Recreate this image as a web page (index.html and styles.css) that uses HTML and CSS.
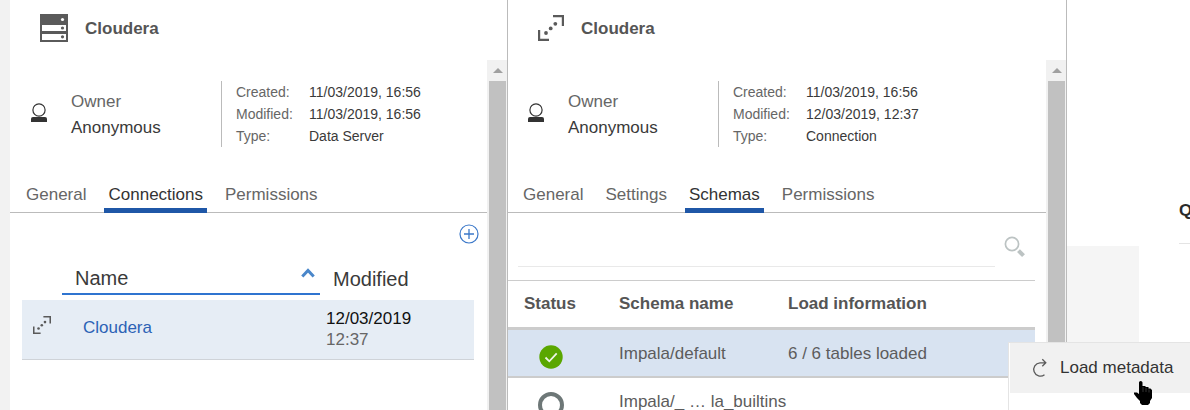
FILE: index.html
```html
<!DOCTYPE html>
<html lang="en">
<head>
<meta charset="utf-8">
<title>Cloudera</title>
<meta name="viewport" content="width=device-width, initial-scale=1">
<link rel="stylesheet" href="styles.css">
</head>
<body>
<svg class="sprite" aria-hidden="true">
  <symbol id="user" viewBox="0 0 16 20">
    <circle cx="8" cy="7" r="6.1" fill="none" stroke="#333" stroke-width="1.2"/>
    <path d="M0 19v-3q0-2 2-2h12q2 0 2 2v3z" fill="#333"/>
  </symbol>
  <symbol id="connection" viewBox="0 0 26 26">
    <path d="M15 1.1h9.9V11M1.1 15v9.9H11" fill="none" stroke="#5a5a5a" stroke-width="2.2"/>
    <circle cx="8" cy="18" r="1.9" fill="#5a5a5a"/><circle cx="12.7" cy="13.4" r="1.9" fill="#5a5a5a"/><circle cx="17.3" cy="8.8" r="1.9" fill="#5a5a5a"/>
  </symbol>
</svg>
<main class="workspace">
  <section class="panel panel-server">
    <header class="panel-header">
      <svg class="server-icon" viewBox="0 0 28 28" aria-hidden="true">
        <path d="M0 0h28v28H0z" fill="#5a5a5a"/>
        <path d="M2 11h24v6H2zM2 20h24v6H2z" fill="#fff"/>
        <circle cx="22.500" cy="5.500" r="1.600" fill="#fff"/><circle cx="22.500" cy="14" r="1.600" fill="#5a5a5a"/><circle cx="22.500" cy="22.800" r="1.600" fill="#5a5a5a"/>
      </svg>
      <h1 class="panel-title">Cloudera</h1>
    </header>
    <div class="panel-body">
      <div class="panel-content">
        <div class="summary">
          <svg class="user-icon" aria-hidden="true"><use href="#user"/></svg>
          <div class="owner"><div class="muted">Owner</div><div>Anonymous</div></div>
          <dl class="facts">
            <dt>Created:</dt><dd>11/03/2019, 16:56</dd>
            <dt>Modified:</dt><dd>11/03/2019, 16:56</dd>
            <dt>Type:</dt><dd>Data Server</dd>
          </dl>
        </div>
        <nav class="tabs">
          <button class="tab" type="button">General</button>
          <button class="tab active" type="button">Connections</button>
          <button class="tab" type="button">Permissions</button>
        </nav>
        <div class="toolbar">
          <button class="icon-button" type="button" aria-label="Add connection">
            <svg width="20" height="20" viewBox="0 0 20 20"><circle cx="10" cy="10" r="9" fill="none" stroke="#3b78c9" stroke-width="1.2"/><path d="M10 5v10M5 10h10" stroke="#3b78c9" stroke-width="1.3"/></svg>
          </button>
        </div>
        <table class="connections">
          <thead>
            <tr>
              <th class="col-icon"></th>
              <th class="col-name"><button class="sort" type="button">Name
                <svg width="14" height="10" viewBox="0 0 14 10" aria-hidden="true"><path d="M1.3 8.5L7 2.500l5.700 6" fill="none" stroke="#4a87ca" stroke-width="3"/></svg></button></th>
              <th class="col-modified">Modified</th>
            </tr>
          </thead>
          <tbody>
            <tr>
              <td class="type"><svg width="18" height="18" aria-hidden="true"><use href="#connection"/></svg></td>
              <td class="name"><a href="#cloudera">Cloudera</a></td>
              <td class="modified"><div class="date">12/03/2019</div><div>12:37</div></td>
            </tr>
          </tbody>
        </table>
      </div>
      <div class="scrollbar" aria-hidden="true"><div class="arrow"></div><div class="thumb"></div></div>
    </div>
  </section>

  <section class="panel panel-connection">
    <header class="panel-header">
      <svg class="connection-icon" aria-hidden="true"><use href="#connection"/></svg>
      <h1 class="panel-title">Cloudera</h1>
    </header>
    <div class="panel-body">
      <div class="panel-content">
        <div class="summary">
          <svg class="user-icon" aria-hidden="true"><use href="#user"/></svg>
          <div class="owner"><div class="muted">Owner</div><div>Anonymous</div></div>
          <dl class="facts">
            <dt>Created:</dt><dd>11/03/2019, 16:56</dd>
            <dt>Modified:</dt><dd>12/03/2019, 12:37</dd>
            <dt>Type:</dt><dd>Connection</dd>
          </dl>
        </div>
        <nav class="tabs">
          <button class="tab" type="button">General</button>
          <button class="tab" type="button">Settings</button>
          <button class="tab active" type="button">Schemas</button>
          <button class="tab" type="button">Permissions</button>
        </nav>
        <form class="search">
          <input type="search" aria-label="Search schemas">
          <button class="icon-button" type="button" aria-label="Search">
            <svg width="22" height="22" viewBox="0 0 22 22"><circle cx="8" cy="8" r="6.6" fill="none" stroke="#bcc3c3" stroke-width="1.7"/><path d="M14.500 14.700l5 5" stroke="#bcc3c3" stroke-width="4"/></svg>
          </button>
        </form>
        <table class="schemas">
          <thead>
            <tr><th class="col-status">Status</th><th class="col-schema">Schema name</th><th>Load information</th></tr>
          </thead>
          <tbody>
            <tr class="selected">
              <td class="status"><svg width="26" height="26" viewBox="0 0 26 26" role="img" aria-label="Loaded"><circle cx="13" cy="13" r="11.7" fill="#5aa700"/><path d="M7.500 13.500l3.800 3.800 7.400-8" fill="none" stroke="#eef5e6" stroke-width="1.8"/></svg></td>
              <td>Impala/default</td><td>6 / 6 tables loaded</td>
            </tr>
            <tr>
              <td class="status"><svg width="26" height="26" viewBox="0 0 26 26" role="img" aria-label="Not loaded"><circle cx="13" cy="13" r="11" fill="none" stroke="#6d7777" stroke-width="4"/></svg></td>
              <td>Impala/_ … la_builtins</td><td></td>
            </tr>
          </tbody>
        </table>
      </div>
      <div class="scrollbar" aria-hidden="true"><div class="arrow"></div><div class="thumb"></div></div>
    </div>
  </section>

  <aside class="backdrop">
    <div class="backdrop-head"><h2>Q</h2></div>
    <div class="backdrop-tile"></div>
  </aside>
</main>

<div class="menu" role="menu">
  <button class="menu-item" type="button" role="menuitem">
    <svg width="16" height="20" viewBox="0 0 16 20" aria-hidden="true"><path d="M13.500 4.800H8A6.700 6.700 0 1 0 12.500 16.800M10.300 1.300L13.800 4.800 10.300 8.300" fill="none" stroke="#5a5a5a" stroke-width="1.3"/></svg>
    Load metadata
  </button>
  <svg class="pointer" viewBox="0 0 18 24" aria-hidden="true"><path d="M5 1.500Q5 0 6.700 0T8.500 1.500V5h3v1h3v1.500h2l1.500 1.500v8l-2 3v2l-2 2H8l-2-2v-2l-3-3-3-4v-1.500h3l2 1.500z" fill="#000"/><path d="M9 6v5M12 7v4M15 8.500v3" stroke="#555" stroke-width=".6"/></svg>
</div>
</body>
</html>
```
FILE: styles.css
```css
* { box-sizing: border-box; }

body {
  margin: 0;
  height: 100vh;
  overflow: hidden;
  position: relative;
  background: #fff;
  color: #3a3a3a;
  font: 17px/20px "Liberation Sans", Arial, sans-serif;
}

h1, h2, dl, dd { margin: 0; }

button, input {
  margin: 0;
  padding: 0;
  border: 0;
  background: none;
  color: inherit;
  font: inherit;
}

svg { display: block; flex: none; }
.sprite { position: absolute; width: 0; height: 0; }

.workspace {
  display: grid;
  grid-template-columns: 497fr 560fr 123fr;
  height: 100%;
  padding-left: 10px;
  background: linear-gradient(to right, #f2f2f2 10px, #fff 10px);
}

.panel {
  display: flex;
  flex-direction: column;
  min-width: 0;
  min-height: 0;
}
.panel-connection {
  border-left: 1px solid #bbb;
  border-right: 1px solid #bbb;
}

.panel-header {
  display: flex;
  align-items: center;
  gap: 17px;
  height: 60px;
  padding: 0 30px 4px;
}
.panel-title {
  padding-top: 2px;
  color: #555;
  font-size: 17px;
}
.server-icon { width: 28px; height: 28px; }
.connection-icon { width: 26px; height: 26px; }

.panel-body { display: flex; flex: 1; min-height: 0; }
.panel-content { flex: 1; min-width: 0; overflow: hidden; }

.scrollbar {
  flex: none;
  display: flex;
  flex-direction: column;
  width: 20px;
  padding: 0 1px 0 2px;
  background: #f1f1f1;
}
.arrow {
  display: flex;
  align-items: center;
  justify-content: center;
  height: 21px;
}
.arrow::before {
  content: "";
  border: 5px solid transparent;
  border-top: 0;
  border-bottom-color: #a0a0a0;
}
.thumb { flex: 1; background: #c1c1c1; }

.summary {
  display: flex;
  padding: 21px 0 0 21px;
}
.panel-connection .summary { padding-left: 20px; }
.user-icon { width: 16px; height: 20px; margin-top: 22px; }
.owner {
  width: 150px;
  margin: 8px 0 0 24px;
  line-height: 26px;
}
.muted { color: #666; }
.facts {
  display: grid;
  grid-template-columns: 73px auto;
  padding-left: 14px;
  border-left: 1px solid #bbb;
  font-size: 14px;
  line-height: 22px;
}
.facts dt { color: #666; }

.tabs {
  display: flex;
  gap: 14px;
  margin-top: 38px;
  padding-left: 12px;
  border-bottom: 1px solid #bbb;
}
.panel-connection .tabs { padding-left: 11px; }
.tab {
  margin-bottom: -1px;
  padding: 0 4px 3px;
  border-bottom: 5px solid transparent;
  color: #666;
  white-space: nowrap;
}
.tab.active { border-color: #1f57a7; color: #333; }

.toolbar {
  display: flex;
  justify-content: flex-end;
  padding: 11px 8px 18px;
}

table { border-collapse: collapse; text-align: left; }
th, td { padding: 0; }

.connections {
  width: calc(100% - 25px);
  margin: 0 13px 0 12px;
  table-layout: fixed;
}
.connections th {
  padding-bottom: 5px;
  font-size: 20px;
  font-weight: normal;
}
.col-icon { width: 40px; }
.col-name { width: 258px; }
.connections .col-modified { padding-left: 13px; }
.sort {
  display: flex;
  justify-content: space-between;
  width: 100%;
  height: 33px;
  padding: 6px 5px 0 13px;
  border-bottom: 2px solid #2f74d0;
}
.connections tbody tr {
  height: 59px;
  border-bottom: 1px solid #cfd3d8;
  background: #e6edf5;
}
.connections .type { padding: 0 0 8px 11px; }
.connections .name { padding: 0 0 2px 21px; }
.connections a { color: #2c62b5; text-decoration: none; }
.connections .modified {
  padding: 0 0 1px 6px;
  color: #666;
  line-height: 21px;
}
.modified .date { color: #111; }

.search {
  display: flex;
  align-items: flex-end;
  gap: 9px;
  height: 67px;
  padding: 0 20px 13px 10px;
}
.search input {
  flex: 1;
  min-width: 0;
  height: 40px;
  border-bottom: 1px solid #e9e9e9;
}
.search .icon-button { margin-bottom: 9px; }

.schemas {
  width: calc(100% - 11px);
  border-top: 1px solid #ccc;
  color: #5c5c5c;
  table-layout: fixed;
}
.col-status { width: 111px; }
.col-schema { width: 169px; }
.schemas thead tr { height: 48px; border-bottom: 3px solid #ccc; }
.schemas th { color: #555; }
.schemas th:first-child { padding-left: 16px; }
.schemas tbody tr { height: 48px; border-bottom: 2px solid #ccc; }
.schemas td { padding-top: 2px; white-space: nowrap; }
.schemas .selected { background: #d8e3f1; }
.schemas .status { padding: 8px 0 0 30px; }

.backdrop {
  display: flex;
  flex-direction: column;
  min-width: 0;
  overflow: hidden;
}
.backdrop-head {
  height: 244px;
  margin-left: auto;
  width: 11px;
  padding-top: 201px;
  border-bottom: 1px solid #e4e4e4;
}
.backdrop h2 { color: #2a2a2a; font-size: 17px; }
.backdrop-tile {
  flex: 1;
  width: 72px;
  margin-top: 2px;
  background: #f5f5f5;
}

.menu {
  position: absolute;
  top: 342px;
  right: 0;
  bottom: 0;
  width: 182px;
  padding-left: 1px;
  border-top: 1px solid #e4e4e4;
  border-left: 1px solid #e4e4e4;
  background: #fff;
}
.menu-item {
  display: flex;
  align-items: center;
  gap: 12px;
  width: 100%;
  height: 50px;
  padding-left: 22px;
  background: #f1f1f1;
  color: #333;
  white-space: nowrap;
}
.pointer {
  position: absolute;
  top: 38px;
  left: 125px;
  width: 18px;
  height: 24px;
}
```
